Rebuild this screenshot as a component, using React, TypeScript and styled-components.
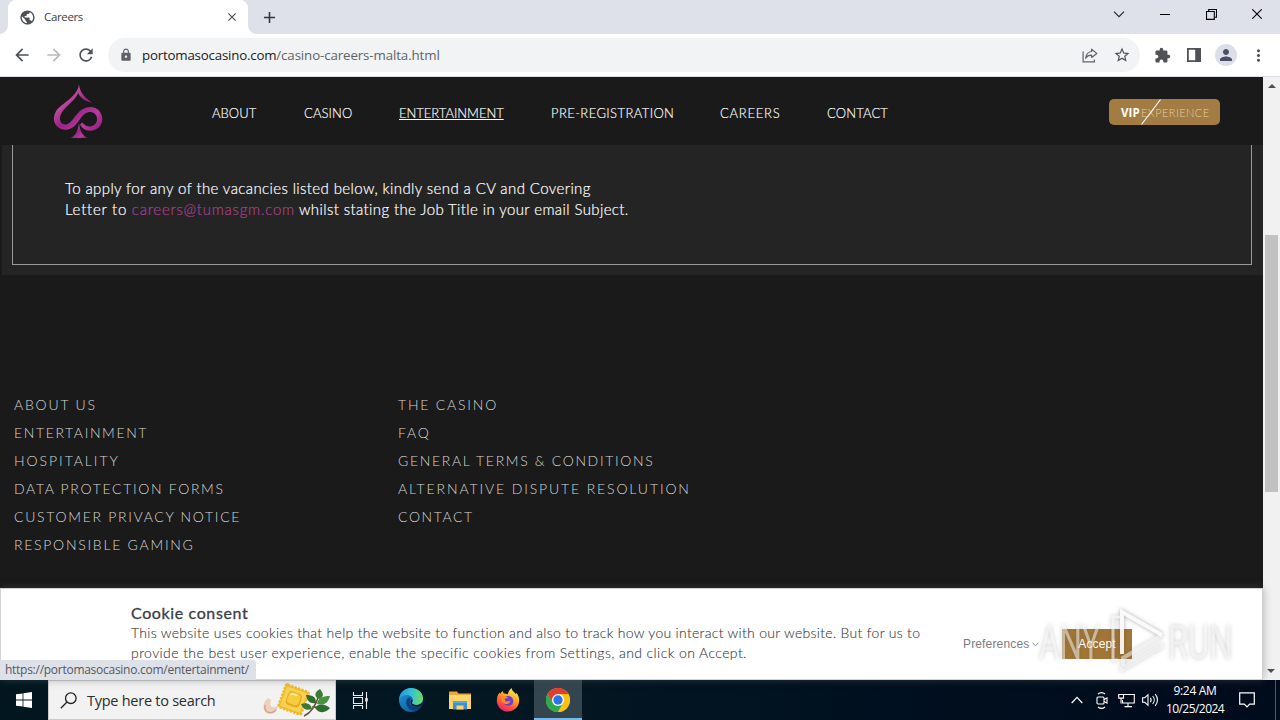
import React from 'react';
import styled, { createGlobalStyle } from 'styled-components';
import {
  MdAdd,
  MdArrowBack,
  MdArrowForward,
  MdClose,
  MdExtension,
  MdLock,
  MdMoreVert,
  MdPerson,
  MdPublic,
  MdRefresh,
  MdStarBorder,
} from 'react-icons/md';

const GlobalStyle = createGlobalStyle`
  * { box-sizing: border-box; }
  body { margin: 0; overflow: hidden; }
  svg { display: block; flex: none; }
`;

const brandFont = 'Lato, "Liberation Sans", sans-serif';
const systemFont = '"Open Sans", "Noto Sans", sans-serif';

const Desktop = styled.div`
  width: 1280px;
  height: 720px;
  display: flex;
  flex-direction: column;
  background: #1a1a1a;
  font-family: ${systemFont};
  overflow: hidden;
`;

/* ---------- Browser chrome ---------- */

const TabStrip = styled.div`
  height: 34px;
  flex: none;
  display: flex;
  justify-content: space-between;
  padding-left: 8px;
  background: #dee1e9;
`;

const TabGroup = styled.div`
  display: flex;
`;

const Tab = styled.div`
  position: relative;
  width: 240px;
  height: 34px;
  display: flex;
  align-items: center;
  padding: 0 9px 0 11px;
  border-radius: 8px 8px 0 0;
  background: #fff;
  color: #4e5257;

  &::before,
  &::after {
    content: '';
    position: absolute;
    bottom: 0;
    width: 8px;
    height: 8px;
  }
  &::before {
    left: -8px;
    background: radial-gradient(circle at 0 0, transparent 7.5px, #fff 8px);
  }
  &::after {
    right: -8px;
    background: radial-gradient(circle at 100% 0, transparent 7.5px, #fff 8px);
  }
`;

const TabTitle = styled.span`
  flex: 1;
  padding: 0 0 1px 8px;
  font-size: 11.5px;
  letter-spacing: -0.35px;
  color: #3c4043;
`;

const NewTab = styled.div`
  width: 28px;
  margin-left: 7px;
  display: flex;
  align-items: center;
  justify-content: center;
  color: #34373c;
`;

const WindowButtons = styled.div`
  display: flex;
  height: 28px;
`;

const WindowButton = styled.div`
  width: 46px;
  display: flex;
  align-items: center;
  justify-content: center;
`;

const Toolbar = styled.div`
  height: 43px;
  flex: none;
  display: flex;
  align-items: center;
  padding: 0 6px;
  background: #fff;
  border-bottom: 1px solid #dadde1;
`;

const ToolButton = styled.div<{ $muted?: boolean }>`
  width: 32px;
  height: 32px;
  display: flex;
  align-items: center;
  justify-content: center;
  color: ${(p) => (p.$muted ? '#b9bbbe' : '#4e5257')};
`;

const Omnibox = styled.div`
  flex: 1;
  height: 34px;
  margin: 0 6px;
  display: flex;
  align-items: center;
  padding: 0 2px 0 11px;
  border-radius: 17px;
  background: #f1f3f4;
  color: #5f6368;
`;

const Address = styled.div`
  flex: 1;
  padding-left: 9px;
  font-size: 13.3px;
  line-height: 18px;
  letter-spacing: -0.11px;
  color: #5f6368;
`;

const Host = styled.span`
  color: #202124;
  letter-spacing: -0.2px;
`;

const Avatar = styled.div`
  width: 22px;
  height: 22px;
  border-radius: 50%;
  display: flex;
  align-items: center;
  justify-content: center;
  background: #dcdfea;
  color: #4a4f66;
`;

/* ---------- Page ---------- */

const Viewport = styled.div`
  height: 603px;
  flex: none;
  display: flex;
`;

const Page = styled.div`
  position: relative;
  width: 1263px;
  display: flex;
  flex-direction: column;
  background: #1a1a1a;
  font-family: ${brandFont};
`;

const SiteHeader = styled.header`
  height: 68px;
  flex: none;
  display: flex;
  align-items: center;
  padding: 0 43px 0 40px;
  background: #1a1a1a;
`;

const Nav = styled.nav`
  flex: 1;
  display: flex;
  gap: 47px;
  padding: 3px 0 0 92px;
`;

const NavLink = styled.a<{ $width: number; $track: number; $active?: boolean }>`
  width: ${(p) => p.$width}px;
  white-space: nowrap;
  font-size: 13px;
  font-weight: 300;
  line-height: 16px;
  letter-spacing: ${(p) => p.$track}px;
  color: #fff;
  text-decoration: ${(p) => (p.$active ? 'underline' : 'none')};
  text-decoration-thickness: 1px;
  text-underline-offset: 1px;
  -webkit-text-stroke: 0.15px #fff;
`;

const VipButton = styled.div`
  position: relative;
  width: 111px;
  height: 26px;
  margin-top: 2px;
  display: flex;
  align-items: center;
  padding: 1px 0 0 12px;
  border-radius: 5px;
  background: #a27c42;
  color: #e3cdab;
  font-size: 11px;
  font-weight: 300;
  letter-spacing: 0.45px;
`;

const VipMark = styled.b`
  width: 20px;
  font-family: ${systemFont};
  font-size: 11.5px;
  font-weight: 700;
  letter-spacing: 0.1px;
  color: #fff;
`;

const VipSlash = styled.svg`
  position: absolute;
  left: 32px;
  top: 0;
`;

const Intro = styled.section`
  height: 130px;
  flex: none;
  margin-left: 2px;
  padding: 0 11px 10px 10px;
  background: #242424;
`;

const IntroFrame = styled.div`
  height: 120px;
  padding: 33px 52px 0;
  border: 1px solid #9a9a9a;
  border-top: 0;
  color: #fff;
  font-size: 15px;
  font-weight: 300;
  line-height: 21px;
  -webkit-text-stroke: 0.2px currentColor;
`;

const IntroLine = styled.div`
  white-space: nowrap;
  letter-spacing: 0.39px;
`;

const Tracked = styled.span<{ $track: number }>`
  letter-spacing: ${(p) => p.$track}px;
`;

const MailLink = styled.a`
  letter-spacing: 0.76px;
  color: #a8408f;
`;

const Footer = styled.footer`
  flex: 1;
  display: flex;
  padding: 116px 0 0 14px;
`;

const FooterColumn = styled.div`
  width: 384px;
  display: flex;
  flex-direction: column;
`;

const FooterLink = styled.a<{ $track: number }>`
  height: 28px;
  line-height: 28px;
  font-size: 14px;
  font-weight: 300;
  white-space: nowrap;
  letter-spacing: ${(p) => p.$track}px;
  color: #d6d6d6;
`;

const CookieBar = styled.div`
  height: 92px;
  flex: none;
  display: flex;
  align-items: center;
  padding: 0 130px;
  background: #fff;
  border: 1px solid #cfd3d6;
  box-shadow: 0 0 8px rgba(90, 90, 90, 0.45);
  color: #36363c;
`;

const CookieText = styled.div`
  width: 832px;
  padding-bottom: 3px;
  white-space: nowrap;
  font-size: 14px;
  font-weight: 300;
  line-height: 20px;
  -webkit-text-stroke: 0.1px currentColor;
`;

const CookieTitle = styled.h2`
  margin: 0;
  font-size: 16px;
  font-weight: 400;
  line-height: 20px;
  letter-spacing: 0.62px;
  color: #3c3c44;
  -webkit-text-stroke: 0.3px currentColor;
`;

const CookieLine = styled.p<{ $track: number }>`
  margin: 0;
  letter-spacing: ${(p) => p.$track}px;
`;

const Preferences = styled.div`
  width: 99px;
  display: flex;
  align-items: center;
  gap: 3px;
  padding-top: 20px;
  font: 12px 'Liberation Sans', sans-serif;
  letter-spacing: 0.15px;
  color: #7c7c7c;
`;

const AcceptButton = styled.div`
  width: 70px;
  height: 30px;
  flex: none;
  margin-top: 20px;
  font: 12px/30px 'Liberation Sans', sans-serif;
  text-align: center;
  letter-spacing: 0.1px;
  background: #a27636;
  color: #fff;
`;

const StatusBubble = styled.div`
  position: absolute;
  left: 0;
  bottom: 0;
  width: 256px;
  height: 20px;
  padding-left: 5px;
  border-top-right-radius: 3px;
  background: #dfe1e8;
  font: 12px/20px ${systemFont};
  letter-spacing: -0.27px;
  white-space: nowrap;
  color: #55585e;
`;

const Watermark = styled.svg`
  position: absolute;
  left: 1030px;
  top: 525px;
  filter: drop-shadow(0 0 2px rgba(70, 70, 70, 0.5));
`;

const Scrollbar = styled.div`
  width: 17px;
  display: flex;
  flex-direction: column;
  align-items: center;
  background: #f1f1f1;
`;

const ScrollArrow = styled.div<{ $down?: boolean }>`
  width: 17px;
  height: 17px;
  display: flex;
  align-items: center;
  justify-content: center;
  transform: ${(p) => (p.$down ? 'rotate(180deg)' : 'none')};
`;

const ScrollTrack = styled.div`
  flex: 1;
  width: 13px;
  padding-top: 141px;
`;

const ScrollThumb = styled.div`
  height: 257px;
  background: #c1c1c1;
`;

/* ---------- Taskbar ---------- */

const Taskbar = styled.div`
  height: 40px;
  flex: none;
  display: flex;
  background: linear-gradient(90deg, #021620 0%, #031722 40%, #000f1f 72%, #000b1c 100%);
`;

const StartButton = styled.div`
  width: 48px;
  display: flex;
  align-items: center;
  justify-content: center;
`;

const SearchBox = styled.div`
  width: 288px;
  display: flex;
  align-items: center;
  padding: 0 4px 0 11px;
  background: #f2f2f2;
  border: 1px solid #c9ccce;
  color: #2c2c2c;
  font-size: 14.5px;
  letter-spacing: -0.26px;
`;

const SearchLabel = styled.span`
  flex: 1;
  padding: 1px 0 0 10px;
`;

const TaskButton = styled.div<{ $active?: boolean; $width: number }>`
  width: ${(p) => p.$width}px;
  display: flex;
  align-items: center;
  justify-content: center;
  background: ${(p) => (p.$active ? '#33454e' : 'transparent')};
  box-shadow: ${(p) => (p.$active ? 'inset 0 -2px #76b9ed' : 'none')};
`;

const Tray = styled.div`
  flex: 1;
  display: flex;
  justify-content: flex-end;
  align-items: center;
`;

const TrayIcon = styled.div<{ $width: number }>`
  width: ${(p) => p.$width}px;
  display: flex;
  justify-content: center;
`;

const Clock = styled.div`
  width: 64px;
  font-size: 12px;
  line-height: 18px;
  text-align: center;
  color: #fff;
`;

const ClockLine = styled.div<{ $track: number }>`
  letter-spacing: ${(p) => p.$track}px;
`;

const PeekEdge = styled.div`
  width: 5px;
  height: 40px;
  margin-left: 8px;
  border-left: 1px solid #4d5a66;
`;

/* ---------- Icons ---------- */

const ChevronDown = () => (
  <svg width="12" height="7" viewBox="0 0 12 7" fill="none" stroke="#222" strokeWidth="1.1">
    <path d="M1 .7 6 5.7l5-5" />
  </svg>
);

const MinimizeIcon = () => (
  <svg width="10" height="10" viewBox="0 0 10 10" stroke="#000">
    <path d="M0 5.5h10" />
  </svg>
);

const RestoreIcon = () => (
  <svg width="11" height="11" viewBox="0 0 11 11" fill="none" stroke="#000" strokeWidth="1.1">
    <path d="M.5 2.5h7.8v7.9H.5zM2.7 2.5v-2h7.8v7.8H8.3" />
  </svg>
);

const CloseIcon = () => (
  <svg width="10" height="10" viewBox="0 0 10 10" stroke="#000" strokeWidth="1.1">
    <path d="m.3.3 9.4 9.4M9.7.3.3 9.7" />
  </svg>
);

const ShareIcon = () => (
  <svg width="16" height="15" viewBox="0 0 16 15" fill="none" stroke="#5f6368" strokeWidth="1.2">
    <path d="M1.1 3.5v10.4h11.2v-2.4" />
    <path d="M9.6 1.2 14.8 5.4 9.6 9.4V7.2C6.8 7.1 5 8 3.6 10.2 4 6.4 6 3.9 9.6 3.5z" strokeLinejoin="round" />
  </svg>
);

const SidePanelIcon = () => (
  <svg width="14" height="14" viewBox="0 0 14 14" fill="#4e5257">
    <path d="M0 0h14v14H0zM1.8 1.8v10.4h6.4V1.8z" fillRule="evenodd" />
  </svg>
);

const SpadeLogo = () => (
  <svg width="80" height="68" viewBox="0 3 240 204">
    <defs>
      <linearGradient id="spade" x1="0" y1="0" x2="1" y2="1">
        <stop offset="0" stopColor="#a93a93" />
        <stop offset=".3" stopColor="#bd4d9d" />
        <stop offset=".5" stopColor="#9b2286" />
        <stop offset=".75" stopColor="#b83a9c" />
        <stop offset="1" stopColor="#8e1a7e" />
      </linearGradient>
    </defs>
    <g fill="url(#spade)">
      <path d="M117 25C119 49 134 65 156 80C137 76 122 67 114 51C106 77 62 97 60 127C59 144 76 151 89 140C107 126 116 94 151 93C174 93 187 112 187 129C187 151 169 165 149 164C135 163 126 156 120 146L126 139C134 149 144 153 154 151C166 148 172 139 171 127C169 113 159 107 147 108C126 110 119 138 101 152C87 163 67 165 54 154C40 143 38 123 48 106C63 82 112 65 117 25Z" />
      <path d="M117 142C120 166 128 179 142 186H92C106 179 114 166 117 142Z" />
    </g>
  </svg>
);

const WindowsLogo = () => (
  <svg width="16" height="16" viewBox="0 0 16 16" fill="#fff">
    <path d="M0 2.3 6.6 1.4v6.2H0zM7.4 1.2 16 0v7.6H7.4zM0 8.4h6.6v6.2L0 13.7zM7.4 8.4H16V16l-8.6-1.2z" />
  </svg>
);

const SearchIcon = () => (
  <svg width="17" height="17" viewBox="0 0 17 17" fill="none" stroke="#222" strokeWidth="1.3">
    <circle cx="10.8" cy="6.2" r="5.3" />
    <path d="M7 10 .8 16.2" />
  </svg>
);

const RavioliArt = () => (
  <svg width="68" height="36" viewBox="0 0 68 36">
    <path d="M4 17C-1 21-1 31 6 32c6 1 9-4 8.500-9-2 3-6 3-7 0-.6-2 0-4 .5-5-1-1-3-2-4-1z" fill="#ecd0bd" />
    <path d="M2 23c-1 4 1 7.500 5 7.500 3 0 5-1 6-3" fill="none" stroke="#c99d88" strokeWidth="1.2" />
    <g transform="rotate(20 30.500 17.500)">
      <rect x="18.500" y="5.500" width="24" height="24" rx="1.500" fill="#efb92b" stroke="#efb92b" strokeWidth="2.600" strokeDasharray="2.400 1.200" />
      <rect x="20" y="7" width="21" height="21" rx="1" fill="#f7d251" />
      <rect x="23.500" y="10" width="14.500" height="14.500" rx="4" fill="#e9ab20" />
      <rect x="24.500" y="11" width="12" height="11.500" rx="3.500" fill="#f6cc40" />
      <path d="M26 14c1-1.500 4-2 7-1.500" fill="none" stroke="#fdf0a8" strokeWidth="1.500" />
    </g>
    <path d="M41 34c7-3 12-11 15-21M49 25c5 0 10 1 14 3" fill="none" stroke="#6b5232" strokeWidth="1.500" />
    <path d="M56 17c-5-2-5-7 1-10 4 5 4 8-1 10z" fill="#3c7d35" />
    <path d="M53 21c-6 1-9-2-10-8 7 0 10 2 10 8z" fill="#2f6c30" />
    <path d="M54 22c1-6 5-8 13-8-2 7-6 10-13 8z" fill="#4c9140" />
    <path d="M49 27c-6 2-9 0-11-5 6-2 10 0 11 5z" fill="#3a7a36" />
    <path d="M52 26c4-5 10-4 15 0-4 5-11 6-15 0z" fill="#2f6c30" />
  </svg>
);

const TaskViewIcon = () => (
  <svg width="17" height="17" viewBox="0 0 17 17" fill="none" stroke="#e8ecef" strokeWidth="1.100">
    <path d="M1.500 0v3.500h9V0M1.500 17v-3.500h9V17M1.500 5.500h9v6h-9zM14.500 0v17" />
    <path d="M13.200 6h2.600v3.500h-2.600z" fill="#e8ecef" stroke="none" />
  </svg>
);

const EdgeIcon = () => (
  <svg width="24" height="24" viewBox="0 0 24 24">
    <defs>
      <linearGradient id="edgeTop" x1="0" y1=".3" x2="1" y2=".4">
        <stop offset="0" stopColor="#2294dd" />
        <stop offset=".5" stopColor="#35c1d6" />
        <stop offset="1" stopColor="#68dd65" />
      </linearGradient>
      <linearGradient id="edgeBody" x1="0" y1="0" x2="1" y2="1">
        <stop offset="0" stopColor="#1a9be0" />
        <stop offset="1" stopColor="#114a8b" />
      </linearGradient>
    </defs>
    <circle cx="12" cy="12" r="12" fill="url(#edgeBody)" />
    <path d="M0 12C.3 5 5.500 0 12 0s12 4.500 12 10.500c0 4-3 6.500-6.500 6.500-3 0-4.500-1.200-4.500-2 0-.700 1-1.200 1-3C14 9.500 11.500 7 8 7 4 7 1 9.500 0 12z" fill="url(#edgeTop)" />
    <path d="M9.500 9.500C7.500 11 6.500 13.500 7.500 16.500c1.200 4 5 6.500 9 6.200 2.300-1 4.300-2.700 5.500-4.700-5 2.600-11 .500-11.500-3.500-.2-2 .5-3.200 1.500-3.500-.500-1-1.500-1.500-2.500-1.500z" fill="#0c3f7c" />
    <path d="M13 15c0 .8 1.500 2 4.500 2 2.300 0 4.300-1 5.500-2.800.2 1.400 0 2.300-.6 3.400-4.600 2.900-10.400.4-10.900-2.900-.1-1.700.2-2.900 1.200-3.400.8 1.200.800 2.300.4 2.900-.1.300-.1.600-.1.800z" fill="#021a26" />
  </svg>
);

const FolderIcon = () => (
  <svg width="22" height="19" viewBox="0 0 22 19">
    <path d="M0 1.500C0 .7.500.5 1 .5h7l1.500 2H22V8H0z" fill="#e9a83a" />
    <path d="M0 4h22v14H0z" fill="#fbd56b" />
    <path d="M4 10h14v8.500H4z" fill="#3f8fc9" />
    <path d="M7.500 14.500h7v4h-7z" fill="#fbd56b" />
    <path d="M4 10h14v2H4z" fill="#5ba9de" />
  </svg>
);

const FirefoxIcon = () => (
  <svg width="24" height="24" viewBox="0 0 24 24">
    <defs>
      <linearGradient id="fox" x1=".8" y1="0" x2=".3" y2="1">
        <stop offset="0" stopColor="#fff14f" />
        <stop offset=".4" stopColor="#ffab27" />
        <stop offset=".7" stopColor="#ff5a36" />
        <stop offset="1" stopColor="#e81e72" />
      </linearGradient>
    </defs>
    <path d="M15.500 0c.5 3 3 4 4.500 6.200.2-.7 0-1.200-.1-1.700C22 6.500 23.200 9 23.200 12.300 23.200 18.600 18.300 23.500 12 23.500S.8 18.600.8 12.400C.8 9 2 6.300 3.800 4.300c0 .8 0 1.200.3 1.700.7-1.300 1.600-2.200 2.800-2.900 0 1 .3 1.700 1 2.400 1.500 0 2.600.1 3.600.9 1-2.500 2-4.700 4-6.400z" fill="url(#fox)" />
    <circle cx="12.300" cy="13" r="5" fill="#6d3fd0" />
    <path d="M6 8.500c2-1 4.500-.5 6 1-1 .8-2 1-3 1.200-.5.700-.2 1.600.5 2.300 1.500 1 3.500 0 5-.5-.5 2.500-2.500 3.800-5 3.500C6.500 15.500 5 12 6 8.500z" fill="#ff8a25" />
  </svg>
);

const ChromeIcon = () => (
  <svg width="24" height="24" viewBox="0 0 24 24">
    <circle cx="12" cy="12" r="12" fill="#fbc116" />
    <path d="M12 6h10.400A12 12 0 0 0 1.600 6l5.200 9z" fill="#e33b2e" />
    <path d="M6.800 15 1.600 6A12 12 0 0 0 12 24l5.200-9z" fill="#2da94f" />
    <path d="M17.200 15 12 24A12 12 0 0 0 22.400 6H12z" fill="#fbc116" />
    <circle cx="12" cy="12" r="6" fill="#fff" />
    <circle cx="12" cy="12" r="4.700" fill="#2a74e8" />
  </svg>
);

const TrayChevron = () => (
  <svg width="12" height="8" viewBox="0 0 12 8" fill="none" stroke="#fff" strokeWidth="1.200">
    <path d="m.7 7 5.300-5.600L11.300 7" />
  </svg>
);

const MeetIcon = () => (
  <svg width="12" height="17" viewBox="0 0 12 17" fill="none" stroke="#fff" strokeWidth="1.100">
    <path d="M2 2C4 .4 7 .4 9 2M2 15c2 1.600 5 1.600 7 0" />
    <rect x="1" y="5" width="7" height="7" rx="1" />
    <path d="M8 7.500 11 6v5L8 9.500" />
  </svg>
);

const NetworkIcon = () => (
  <svg width="17" height="15" viewBox="0 0 17 15" fill="none" stroke="#fff" strokeWidth="1.100">
    <path d="M5.500 1.500h10.800v8.500H4.500V7M10 10v3.500M6.500 13.600h7.500M.7 1.500h4.800v3.600H.7zM3 5.100v5.400" />
  </svg>
);

const SpeakerIcon = () => (
  <svg width="17" height="14" viewBox="0 0 17 14" fill="none" stroke="#fff" strokeWidth="1.100">
    <path d="M.6 4.700h2.200L6 1.700v10.600L2.800 9.300H.6zM8.300 4.800c1 1.300 1 3.100 0 4.400M10.700 3c2 2.300 2 5.700 0 8M13.200 1.200c3 3.400 3 8.200 0 11.600" />
  </svg>
);

const NotificationIcon = () => (
  <svg width="16" height="16" viewBox="0 0 16 16" fill="none" stroke="#fff" strokeWidth="1.200">
    <path d="M.7.8h14.600v11.400h-4.600L8 15l-2.700-2.800H.7z" />
  </svg>
);

const navLinks = [
  { label: 'ABOUT', width: 45, track: 0.05 },
  { label: 'CASINO', width: 48, track: 0.1 },
  { label: 'ENTERTAINMENT', width: 105, track: -0.02 },
  { label: 'PRE-REGISTRATION', width: 122, track: 0.4 },
  { label: 'CAREERS', width: 60, track: 0.75 },
  { label: 'CONTACT', width: 61, track: 0.15 },
];

const currentLink = 'ENTERTAINMENT';

const footerColumns: { label: string; track: number }[][] = [
  [
    { label: 'ABOUT US', track: 1.8 },
    { label: 'ENTERTAINMENT', track: 1.62 },
    { label: 'HOSPITALITY', track: 1.95 },
    { label: 'DATA PROTECTION FORMS', track: 1.67 },
    { label: 'CUSTOMER PRIVACY NOTICE', track: 1.7 },
    { label: 'RESPONSIBLE GAMING', track: 1.73 },
  ],
  [
    { label: 'THE CASINO', track: 1.8 },
    { label: 'FAQ', track: 1.8 },
    { label: 'GENERAL TERMS & CONDITIONS', track: 1.66 },
    { label: 'ALTERNATIVE DISPUTE RESOLUTION', track: 1.87 },
    { label: 'CONTACT', track: 1.6 },
  ],
];

export default function App() {
  return (
    <Desktop>
      <GlobalStyle />
      <TabStrip>
        <TabGroup>
          <Tab>
            <MdPublic size={17} />
            <TabTitle>Careers</TabTitle>
            <MdClose size={14} />
          </Tab>
          <NewTab>
            <MdAdd size={19} />
          </NewTab>
        </TabGroup>
        <WindowButtons>
          <WindowButton><ChevronDown /></WindowButton>
          <WindowButton><MinimizeIcon /></WindowButton>
          <WindowButton><RestoreIcon /></WindowButton>
          <WindowButton><CloseIcon /></WindowButton>
        </WindowButtons>
      </TabStrip>

      <Toolbar>
        <ToolButton><MdArrowBack size={20} /></ToolButton>
        <ToolButton $muted><MdArrowForward size={20} /></ToolButton>
        <ToolButton><MdRefresh size={20} /></ToolButton>
        <Omnibox>
          <MdLock size={14} />
          <Address>
            <Host>portomasocasino.com</Host>/casino-careers-malta.html
          </Address>
          <ToolButton><ShareIcon /></ToolButton>
          <ToolButton><MdStarBorder size={18} /></ToolButton>
        </Omnibox>
        <ToolButton><MdExtension size={17} /></ToolButton>
        <ToolButton><SidePanelIcon /></ToolButton>
        <ToolButton>
          <Avatar><MdPerson size={18} /></Avatar>
        </ToolButton>
        <ToolButton><MdMoreVert size={19} /></ToolButton>
      </Toolbar>

      <Viewport>
        <Page>
          <SiteHeader>
            <SpadeLogo />
            <Nav>
              {navLinks.map((l) => (
                <NavLink key={l.label} $width={l.width} $track={l.track} $active={l.label === currentLink}>
                  {l.label}
                </NavLink>
              ))}
            </Nav>
            <VipButton>
              <VipMark>VIP</VipMark>
              EXPERIENCE
              <VipSlash width="20" height="26" viewBox="0 0 20 26" stroke="#fff" strokeWidth="1.1">
                <path d="M.5 25.500 19.500.5" />
              </VipSlash>
            </VipButton>
          </SiteHeader>

          <Intro>
            <IntroFrame>
              <IntroLine>
                To apply for any of the vacancies listed below, kindly send a CV and Covering
              </IntroLine>
              <IntroLine>
                <Tracked $track={0.75}>Letter to </Tracked>
                <MailLink>careers@tumasgm.com</MailLink> whilst stating the Job Title in your email Subject.
              </IntroLine>
            </IntroFrame>
          </Intro>

          <Footer>
            {footerColumns.map((col, i) => (
              <FooterColumn key={i}>
                {col.map((l) => (
                  <FooterLink key={l.label} $track={l.track}>{l.label}</FooterLink>
                ))}
              </FooterColumn>
            ))}
          </Footer>

          <CookieBar>
            <CookieText>
              <CookieTitle>Cookie consent</CookieTitle>
              <CookieLine $track={0.3}>
                This website uses cookies that help the website to function and also to track how you interact with our website. But for us to
              </CookieLine>
              <CookieLine $track={0.41}>
                provide the best user experience, enable the specific cookies from Settings, and click on Accept.
              </CookieLine>
            </CookieText>
            <Preferences>
              Preferences
              <svg width="7" height="5" viewBox="0 0 7 5" fill="none" stroke="#8a8a8a">
                <path d="m.5.700 3 3 3-3" />
              </svg>
            </Preferences>
            <AcceptButton>Accept</AcceptButton>
          </CookieBar>

          <StatusBubble>https://portomasocasino.com/entertainment/</StatusBubble>

          <Watermark width="210" height="76" viewBox="0 0 210 76">
            <g fill="#fff" fillOpacity=".5" fontFamily="Roboto, sans-serif" fontSize="48">
              <text transform="translate(9 57) scale(.655 1)">ANY</text>
              <text transform="translate(138 57) scale(.68 1)">RUN</text>
            </g>
            <g fill="none" stroke="#fff">
              <path d="M90 15H83V58H88" strokeWidth="3" strokeOpacity=".6" />
              <path d="M92 52V10L132 33" strokeWidth="4" strokeOpacity=".9" />
              <path d="M132 33 93 56V64" strokeWidth="4" strokeOpacity=".5" />
              <path d="M90 68 133 43" strokeWidth="5" strokeOpacity=".5" />
            </g>
          </Watermark>
        </Page>

        <Scrollbar>
          <ScrollArrow>
            <svg width="8" height="4" viewBox="0 0 8 4" fill="#505050"><path d="M0 4 4 0l4 4z" /></svg>
          </ScrollArrow>
          <ScrollTrack>
            <ScrollThumb />
          </ScrollTrack>
          <ScrollArrow $down>
            <svg width="8" height="4" viewBox="0 0 8 4" fill="#505050"><path d="M0 4 4 0l4 4z" /></svg>
          </ScrollArrow>
        </Scrollbar>
      </Viewport>

      <Taskbar>
        <StartButton><WindowsLogo /></StartButton>
        <SearchBox>
          <SearchIcon />
          <SearchLabel>Type here to search</SearchLabel>
          <RavioliArt />
        </SearchBox>
        <TaskButton $width={48}><TaskViewIcon /></TaskButton>
        <TaskButton $width={54}><EdgeIcon /></TaskButton>
        <TaskButton $width={44}><FolderIcon /></TaskButton>
        <TaskButton $width={52}><FirefoxIcon /></TaskButton>
        <TaskButton $active $width={48}><ChromeIcon /></TaskButton>
        <Tray>
          <TrayIcon $width={24}><TrayChevron /></TrayIcon>
          <TrayIcon $width={26}><MeetIcon /></TrayIcon>
          <TrayIcon $width={22}><NetworkIcon /></TrayIcon>
          <TrayIcon $width={26}><SpeakerIcon /></TrayIcon>
          <Clock>
            <ClockLine $track={-0.3}>9:24 AM</ClockLine>
            <ClockLine $track={-0.55}>10/25/2024</ClockLine>
          </Clock>
          <TrayIcon $width={40}><NotificationIcon /></TrayIcon>
          <PeekEdge />
        </Tray>
      </Taskbar>
    </Desktop>
  );
}
